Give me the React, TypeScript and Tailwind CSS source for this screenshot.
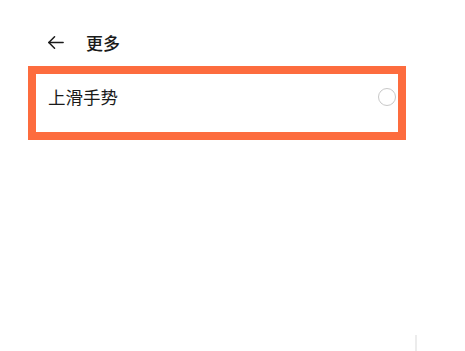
import React from 'react';

export default function App() {
    return (
        <div className="relative w-[465px] h-[351px] bg-white overflow-hidden" style={{ fontFamily: '"Noto Sans CJK SC", "Noto Sans", sans-serif' }}>
            {/* Header */}
            <div className="flex items-center h-[34px] mt-[25px] pl-[46px]">
                <svg width="19" height="19" viewBox="0 0 20 20" fill="none" stroke="#1a1a1a" strokeWidth="1.6" strokeLinecap="round" strokeLinejoin="round">
                    <path d="M18 10H3" />
                    <path d="M9 4L3 10L9 16" />
                </svg>
                <span className="ml-[21px] text-[17px] font-medium text-[#1a1a1a] leading-none">更多</span>
            </div>

            {/* Highlighted row */}
            <div className="ml-[28px] mt-[7px] w-[378px] h-[74px] border-[8px] border-[#fd6c3e]">
                <div className="flex items-center justify-between h-[18px] mt-[14px] pl-[12px] pr-[2px]">
                    <span className="text-[17.5px] text-[#1a1a1a] leading-none">上滑手势</span>
                    <span className="w-[18px] h-[18px] rounded-full border-[1.5px] border-[#c8c8c8]" />
                </div>
            </div>

            {/* Scrollbar hint */}
            <div className="absolute left-[415px] top-[335px] w-[2px] h-[16px] bg-[#ececec]" />
        </div>
    );
}
